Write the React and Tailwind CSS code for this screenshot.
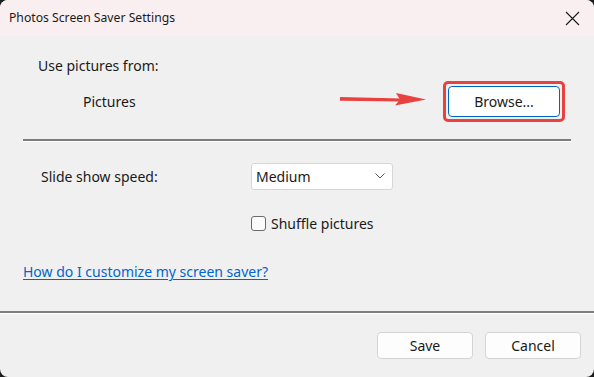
export default function App() {
  return (
    <div className="w-[594px] h-[377px] bg-[#1c1c1c] font-['Segoe_UI','Noto_Sans',sans-serif] text-[#1a1a1a]">
      <div className="w-full h-full rounded-[8px] overflow-hidden flex flex-col bg-[#f0f0f0]">
        {/* title bar */}
        <div className="h-[36px] shrink-0 bg-[#f9eff1] flex items-center justify-between pl-[9px] pr-[14px]">
          <span className="text-[12.2px] leading-none">Photos Screen Saver Settings</span>
          <svg width="15" height="15" viewBox="0 0 15 15" className="text-[#1a1a1a]">
            <path d="M1 1 L14 14 M14 1 L1 14" stroke="currentColor" strokeWidth="1.1" />
          </svg>
        </div>

        {/* body */}
        <div className="flex-1 flex flex-col">
          <div className="pl-[38px] pt-[20px] text-[14px] leading-[20px]">Use pictures from:</div>
          <div className="flex items-center h-[41px] mt-[5px]">
            <span className="pl-[83px] w-[340px] text-[14px]">Pictures</span>
            <svg width="88" height="14" viewBox="0 0 88 14" className="-mt-[6px]">
              <path d="M0 5 L62 6.6 L62 9.6 L0 8.8 Z" fill="#e8413f" />
              <path d="M56 1 L86 7.5 L55 13.5 L60 7.5 Z" fill="#e8413f" />
            </svg>
            <div className="ml-[15px] w-[122px] h-[41px] rounded-[5px] border-[3px] border-[#e8413f] p-[2px]">
              <button className="w-full h-full bg-white border border-[#0067c0] rounded-[4px] text-[14px] text-[#1a1a1a]">
                Browse...
              </button>
            </div>
          </div>

          <div className="mx-[23px] mt-[17px] h-[3px] border-t-2 border-[#7d7d7d] border-b border-b-white" />

          <div className="flex items-center mt-[21px] h-[26px]">
            <span className="pl-[41px] w-[251px] text-[14px]">Slide show speed:</span>
            <div className="w-[142px] h-[27px] bg-white border border-[#d6d6d6] rounded-[3px] flex items-center justify-between pl-[4px] pr-[7px]">
              <span className="text-[14px]">Medium</span>
              <svg width="10" height="6" viewBox="0 0 10 6">
                <path d="M0.5 0.5 L5 5 L9.5 0.5" fill="none" stroke="#555" strokeWidth="1" />
              </svg>
            </div>
          </div>

          <div className="flex items-center mt-[24px] pl-[251px] h-[20px]">
            <span className="w-[15px] h-[15px] rounded-[3px] border border-[#6b6b6b] bg-[#fbfbfb]" />
            <span className="ml-[5px] text-[14px]">Shuffle pictures</span>
          </div>

          <div className="pl-[23px] mt-[26px] h-[20px]">
            <a href="#" className="text-[14px] text-[#0066cc] underline underline-offset-2">
              How do I customize my screen saver?
            </a>
          </div>

          <div className="mt-[32px] h-[3px] border-t-2 border-[#7d7d7d] border-b border-b-white" />

          <div className="flex justify-end gap-[12px] pr-[13px] pt-[18px]">
            <button className="w-[96px] h-[27px] bg-[#fdfdfd] border border-[#d4d4d4] rounded-[4px] text-[14px]">Save</button>
            <button className="w-[96px] h-[27px] bg-[#fdfdfd] border border-[#d4d4d4] rounded-[4px] text-[14px]">Cancel</button>
          </div>
        </div>
      </div>
    </div>
  );
}
